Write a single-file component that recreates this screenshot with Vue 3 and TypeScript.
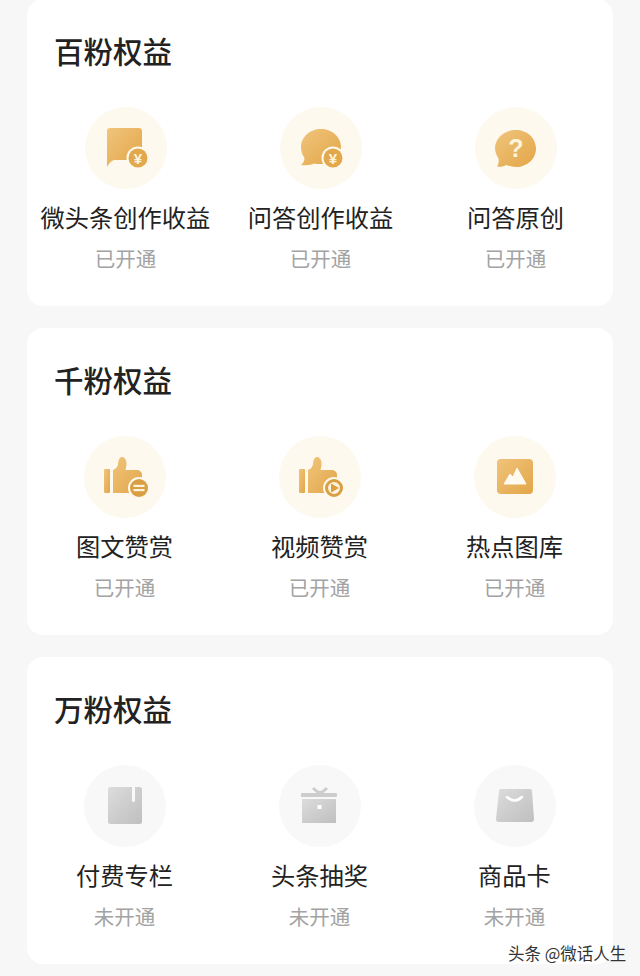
<template>
  <div class="page">
    <svg class="defs" width="0" height="0" aria-hidden="true">
      <defs>
        <linearGradient id="gold" x1="0" y1="0" x2="1" y2="1">
          <stop offset="0" stop-color="#f0c47c" />
          <stop offset="1" stop-color="#e2a648" />
        </linearGradient>
        <linearGradient id="grey" x1="0" y1="0" x2="1" y2="1">
          <stop offset="0" stop-color="#dcdcdc" />
          <stop offset="1" stop-color="#bfbfbf" />
        </linearGradient>
      </defs>
    </svg>

    <section v-for="tier in tiers" :key="tier.title" class="card">
      <h2 class="title">{{ tier.title }}</h2>
      <div class="grid">
        <div v-for="item in tier.items" :key="item.label" class="item">
          <div class="badge" :class="{ off: !tier.open }">
            <svg viewBox="0 0 82 82" width="82" height="82">
              <template v-if="item.icon === 'note'">
                <path d="M22 24a3 3 0 0 1 3-3h29a3 3 0 0 1 3 3v29H30c-3 0-5 2-8 7z" fill="url(#gold)" />
                <circle cx="53" cy="51" r="11.500" fill="#fdf9ee" />
                <circle cx="53" cy="51" r="9.500" fill="#e2a84c" />
                <text x="53" y="56.500" class="glyph yen">¥</text>
              </template>
              <template v-else-if="item.icon === 'answer'">
                <path d="M41 22c11 0 20 8 20 18s-9 17-20 17c-3 0-5 0-7-.5-3 1.500-7 2-13 1.500 2-2 3.500-4 3.500-7C22 47 21 44 21 40c0-10 9-18 20-18z" fill="url(#gold)" />
                <circle cx="53" cy="51" r="11.500" fill="#fdf9ee" />
                <circle cx="53" cy="51" r="9.500" fill="#e2a84c" />
                <text x="53" y="56.500" class="glyph yen">¥</text>
              </template>
              <template v-else-if="item.icon === 'question'">
                <path d="M41 23c11 0 20 8 20 18.500S52 60 41 60c-3.500 0-6.500-.8-9.500-2-3 1.500-6 2.200-9.500 1.500 1.500-2 2-4.500 1.500-8C21.500 48 20 45 20 41.500 20 31 30 23 41 23z" fill="url(#gold)" />
                <text x="41" y="50" class="glyph ask">?</text>
              </template>
              <template v-else-if="item.icon === 'thumb-text' || item.icon === 'thumb-video'">
                <rect x="20" y="33" width="6" height="24" rx="1" fill="url(#gold)" />
                <path d="M29 34c3-1 4.500-3 5-6 .5-5 2-7 4-7 3 0 4.500 3 4.500 7 0 2-.5 4-1 6H52c4 0 6 2 6 5v18H29z" fill="url(#gold)" />
                <circle cx="55" cy="52" r="11" fill="#fdf9ee" />
                <template v-if="item.icon === 'thumb-text'">
                  <circle cx="55" cy="52" r="9" fill="#d99f42" />
                  <rect x="49.500" y="48.800" width="11" height="2.200" fill="#fdf3dc" />
                  <rect x="49.500" y="53" width="11" height="2.200" fill="#fdf3dc" />
                </template>
                <template v-else>
                  <circle cx="55" cy="52" r="7.500" fill="#fdf3dc" stroke="#d99f42" stroke-width="3" />
                  <path d="M52 47.500l8 4.500-8 4.500z" fill="#d99f42" />
                </template>
              </template>
              <template v-else-if="item.icon === 'image'">
                <rect x="23" y="23" width="36" height="35" rx="4" fill="url(#gold)" />
                <path d="M30 48l6-10 3 3 4-9 9 16z" fill="#fffaf0" stroke="#fffaf0" stroke-linejoin="round" />
              </template>
              <template v-else-if="item.icon === 'book'">
                <rect x="24" y="22" width="34" height="37" rx="2.500" fill="url(#grey)" />
                <path d="M48 22h3v13.500a1.500 1.500 0 0 1-3 0z" fill="#f8f8f8" />
              </template>
              <template v-else-if="item.icon === 'gift'">
                <path d="M34 23q4 4 7 5 3-1 7-5" fill="none" stroke="#cdcdcd" stroke-width="3" />
                <rect x="22" y="28" width="36" height="4" rx="1" fill="#cdcdcd" />
                <rect x="23" y="34" width="34" height="24" fill="url(#grey)" />
                <rect x="38.500" y="40" width="4" height="4" fill="#fff" />
              </template>
              <template v-else>
                <path d="M27 24h29a2 2 0 0 1 2 2l2 28a3 3 0 0 1-3 3H25a3 3 0 0 1-3-3l3-28a2 2 0 0 1 2-2z" fill="url(#grey)" />
                <path d="M33 32q7.500 7 15 0" fill="none" stroke="#fff" stroke-width="2.500" stroke-linecap="round" />
              </template>
            </svg>
          </div>
          <div class="label">{{ item.label }}</div>
          <div class="status">{{ tier.open ? "已开通" : "未开通" }}</div>
        </div>
      </div>
    </section>

    <div class="watermark">头条 @微话人生</div>
  </div>
</template>

<script setup lang="ts">
interface Perk {
  label: string;
  icon: string;
}

interface Tier {
  title: string;
  open: boolean;
  items: Perk[];
}

const tiers: Tier[] = [
  {
    title: "百粉权益",
    open: true,
    items: [
      { label: "微头条创作收益", icon: "note" },
      { label: "问答创作收益", icon: "answer" },
      { label: "问答原创", icon: "question" },
    ],
  },
  {
    title: "千粉权益",
    open: true,
    items: [
      { label: "图文赞赏", icon: "thumb-text" },
      { label: "视频赞赏", icon: "thumb-video" },
      { label: "热点图库", icon: "image" },
    ],
  },
  {
    title: "万粉权益",
    open: false,
    items: [
      { label: "付费专栏", icon: "book" },
      { label: "头条抽奖", icon: "gift" },
      { label: "商品卡", icon: "bag" },
    ],
  },
];
</script>

<style>
html,
body {
  margin: 0;
  background: #f7f7f7;
}
</style>

<style scoped>
.page {
  position: relative;
  width: 640px;
  height: 976px;
  overflow: hidden;
  box-sizing: border-box;
  padding: 0 27px;
  display: flex;
  flex-direction: column;
  gap: 22px;
  background: #f7f7f7;
  font-family: "Noto Sans CJK SC", "Noto Sans", sans-serif;
}

.defs {
  position: absolute;
}

.card {
  height: 307px;
  flex: none;
  background: #fff;
  border-radius: 16px;
  display: flex;
  flex-direction: column;
}

.card:first-of-type {
  margin-top: -1px;
}

.title {
  margin: 0;
  height: 108px;
  padding: 33px 0 0 27px;
  box-sizing: border-box;
  font-size: 29.500px;
  line-height: 36px;
  font-weight: 500;
  color: #222;
}

.grid {
  display: grid;
  grid-template-columns: repeat(3, 195px);
}

.card:first-of-type .grid {
  padding-left: 1px;
}

.item {
  display: flex;
  flex-direction: column;
  align-items: center;
}

.badge {
  width: 82px;
  height: 82px;
  border-radius: 50%;
  background: #fdf9ee;
}

.badge.off {
  background: #f8f8f8;
}

.badge svg {
  display: block;
}

.glyph {
  text-anchor: middle;
  font-family: "Liberation Sans", sans-serif;
  font-weight: 700;
}

.yen {
  font-size: 15px;
  fill: #fdf3dc;
}

.ask {
  font-size: 25px;
  fill: #fdf3dc;
}

.label {
  margin-top: 10px;
  font-size: 24.250px;
  line-height: 36px;
  white-space: nowrap;
  color: #222;
}

.status {
  margin-top: 9px;
  font-size: 20.500px;
  line-height: 28px;
  color: #a3a3a3;
}

.watermark {
  position: absolute;
  left: 508px;
  top: 942px;
  font-size: 16.500px;
  line-height: 22px;
  white-space: nowrap;
  color: #333;
  text-shadow: 0 0 2px #fff;
}
</style>
